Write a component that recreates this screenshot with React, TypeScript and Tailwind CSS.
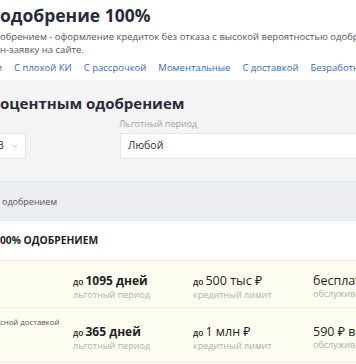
import React from "react";

const font = { fontFamily: '"Open Sans", "Noto Sans", sans-serif' };

function Metric({ pre, value, bold, label }: { pre?: string; value: string; bold?: boolean; label: string }) {
  return (
    <div className="w-[120px] shrink-0 flex flex-col">
      <div className="whitespace-nowrap leading-[15px] text-[#1f1f1f]">
        {pre && <span className="text-[8.5px] font-semibold mr-[2px]">{pre}</span>}
        <span className={bold ? "text-[12px] font-bold" : "text-[12.5px]"}>{value}</span>
      </div>
      <div className="text-[9px] leading-[12px] text-[#b0b0b0] whitespace-nowrap">{label}</div>
    </div>
  );
}

export default function App() {
  return (
    <div className="w-[356px] h-[364px] overflow-hidden bg-white" style={font}>
      <div className="pt-[4px] h-[80px]">
        <div className="text-[17.5px] leading-[22px] font-bold text-[#272c3b] whitespace-nowrap">одобрение 100%</div>
        <div className="text-[9.5px] leading-[13px] text-[#555] whitespace-nowrap mt-[4px]">
          <div>обрением - оформление кредиток без отказа с высокой вероятностью одобрения</div>
          <div>н-заявку на сайте.</div>
        </div>
        <div className="flex gap-[12px] text-[9.5px] leading-[14px] text-[#3a68b4] whitespace-nowrap mt-[5px] ml-[-4px]">
          <span>и</span>
          <span>С плохой КИ</span>
          <span>С рассрочкой</span>
          <span>Моментальные</span>
          <span>С доставкой</span>
          <span>Безработным</span>
        </div>
      </div>
      <div className="h-[102px] bg-[#f4f4f4] border-b border-[#e2e4e8] pt-[13px]">
        <div className="text-[15px] leading-[20px] font-bold text-[#272c3b] whitespace-nowrap">оцентным одобрением</div>
        <div className="flex mt-[5px]">
          <div className="w-[120px] shrink-0 pt-[15px]">
            <div className="w-[27px] h-[26px] bg-white border border-[#e6e6e6] border-l-0 flex items-center ml-[-1px]">
              <span className="text-[10.5px] text-[#333] ml-[-2px]">В</span>
              <svg className="ml-[8px]" width="6" height="4" viewBox="0 0 6 4">
                <path d="M0.5 0.8 L3 3.3 L5.5 0.8" stroke="#aaa" fill="none" strokeWidth="0.8" />
              </svg>
            </div>
          </div>
          <div className="flex-1">
            <div className="text-[9px] leading-[12px] text-[#a3a3a3] ml-[-1px] whitespace-nowrap">Льготный период</div>
            <div className="h-[26px] mt-[3px] bg-white border border-[#e6e6e6] border-r-0 flex items-center pl-[7px] text-[10.5px] text-[#333]">Любой</div>
          </div>
        </div>
      </div>
      <div className="h-[39px] bg-[#eceef1] flex items-center pl-[2px] text-[9px] text-[#555] whitespace-nowrap">одобрением</div>
      <div className="h-[39px] flex items-center text-[10.25px] font-bold text-[#1f1f1f] whitespace-nowrap">00% ОДОБРЕНИЕМ</div>
      <div className="bg-[#fdfcf0] border-t border-[#f0efe4]">
        <div className="h-[47px] flex pt-[11px] border-b border-[#efeee2]">
          <div className="w-[73px] shrink-0" />
          <Metric pre="до" value="1095 дней" bold label="льготный период" />
          <Metric pre="до" value="500 тыс ₽" label="кредитный лимит" />
          <Metric value="бесплатно" label="обслуживание" />
        </div>
        <div className="h-[55px] flex border-b border-[#efeee2]">
          <div className="w-[73px] shrink-0 text-[7.8px] leading-[10px] text-[#555] pt-[9px] whitespace-nowrap">сной доставкой</div>
          <div className="flex pt-[15px]">
            <Metric pre="до" value="365 дней" bold label="льготный период" />
            <Metric pre="до" value="1 млн ₽" label="кредитный лимит" />
            <Metric value="590 ₽ в год" label="обслуживание" />
          </div>
        </div>
      </div>
    </div>
  );
}
